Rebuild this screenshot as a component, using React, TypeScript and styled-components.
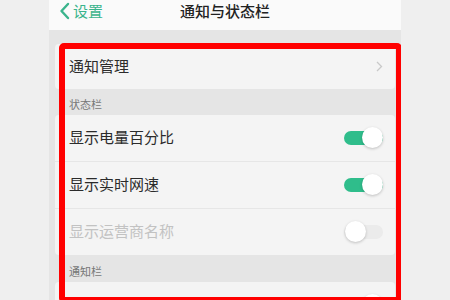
import React from "react";
import styled, { createGlobalStyle } from "styled-components";

const Global = createGlobalStyle`
  html, body { margin: 0; padding: 0; background: #efefef; }
  body { font-family: "Noto Sans CJK SC", "Noto Sans", sans-serif; overflow: hidden; }
`;

const Screen = styled.div`
  position: relative;
  width: 352px;
  height: 300px;
  margin: 0 auto;
  background: #e5e5e5;
  overflow: hidden;
`;

const Header = styled.div`
  height: 30px;
  background: #fafafa;
  display: flex;
  align-items: flex-start;
  justify-content: center;
  position: relative;
`;

const Back = styled.div`
  position: absolute;
  left: 10px;
  top: 2px;
  display: flex;
  align-items: center;
  gap: 3px;
  color: #3ab48c;
  font-size: 15px;
  line-height: 18px;
`;

const Title = styled.div`
  font-size: 15px;
  line-height: 18px;
  margin-top: 2px;
  font-weight: 500;
  color: #222;
`;

const Gap = styled.div`
  height: 14px;
`;

const Card = styled.div`
  margin: 0 6px;
  background: #f4f4f4;
  border-radius: 4px;
  display: flex;
  flex-direction: column;
`;

const Row = styled.div<{ $h: number; $divider?: boolean }>`
  height: ${(p) => p.$h}px;
  display: flex;
  align-items: center;
  justify-content: space-between;
  padding: 0 12px 0 14px;
  border-bottom: ${(p) => (p.$divider ? "1px solid #e6e6e6" : "none")};
`;

const Label = styled.span<{ $disabled?: boolean }>`
  font-size: 15px;
  line-height: 18px;
  margin-top: -2px;
  color: ${(p) => (p.$disabled ? "#c2c2c2" : "#2b2b2b")};
`;

const Section = styled.div<{ $h: number }>`
  height: ${(p) => p.$h}px;
  display: flex;
  align-items: flex-end;
  padding: 0 0 3px 20px;
  box-sizing: border-box;
  font-size: 11px;
  color: #777;
`;

const Track = styled.div<{ $on: boolean }>`
  position: relative;
  width: 39px;
  height: 14px;
  border-radius: 7px;
  background: ${(p) => (p.$on ? "#2fbd8b" : "#ebebeb")};
`;

const Thumb = styled.div<{ $on: boolean }>`
  position: absolute;
  top: -4px;
  ${(p) => (p.$on ? "right: 0;" : "left: 1px;")}
  width: 21px;
  height: 21px;
  border-radius: 50%;
  background: #fff;
  box-shadow: 0 1px 3px rgba(0, 0, 0, 0.22);
`;

const Highlight = styled.div`
  position: absolute;
  left: 10px;
  top: 43px;
  width: 343px;
  height: 260px;
  box-sizing: border-box;
  border: 6px solid #ff0000;
  border-radius: 5px;
  pointer-events: none;
`;

const Toggle = ({ on }: { on: boolean }) => (
  <Track $on={on}>
    <Thumb $on={on} />
  </Track>
);

export default function App() {
  return (
    <>
      <Global />
      <Screen>
        <Header>
          <Back>
            <svg width="11" height="18" viewBox="0 0 11 18">
              <path d="M9 2 L2.5 9 L9 16" fill="none" stroke="#3ab48c" strokeWidth="2.4" strokeLinecap="round" strokeLinejoin="round" />
            </svg>
            <span>设置</span>
          </Back>
          <Title>通知与状态栏</Title>
        </Header>
        <Gap />
        <Card>
          <Row $h={45}>
            <Label>通知管理</Label>
            <svg width="7" height="11" viewBox="0 0 7 11">
              <path d="M1 1 L5.5 5.5 L1 10" fill="none" stroke="#c9c9c9" strokeWidth="1.3" />
            </svg>
          </Row>
        </Card>
        <Section $h={26}>状态栏</Section>
        <Card>
          <Row $h={46} $divider>
            <Label>显示电量百分比</Label>
            <Toggle on />
          </Row>
          <Row $h={46} $divider>
            <Label>显示实时网速</Label>
            <Toggle on />
          </Row>
          <Row $h={46}>
            <Label $disabled>显示运营商名称</Label>
            <Toggle on={false} />
          </Row>
        </Card>
        <Section $h={27}>通知栏</Section>
        <Card>
          <Row $h={46}>
            <Label>通知栏下拉时显示快捷开关</Label>
            <Toggle on />
          </Row>
        </Card>
        <Highlight />
      </Screen>
    </>
  );
}
